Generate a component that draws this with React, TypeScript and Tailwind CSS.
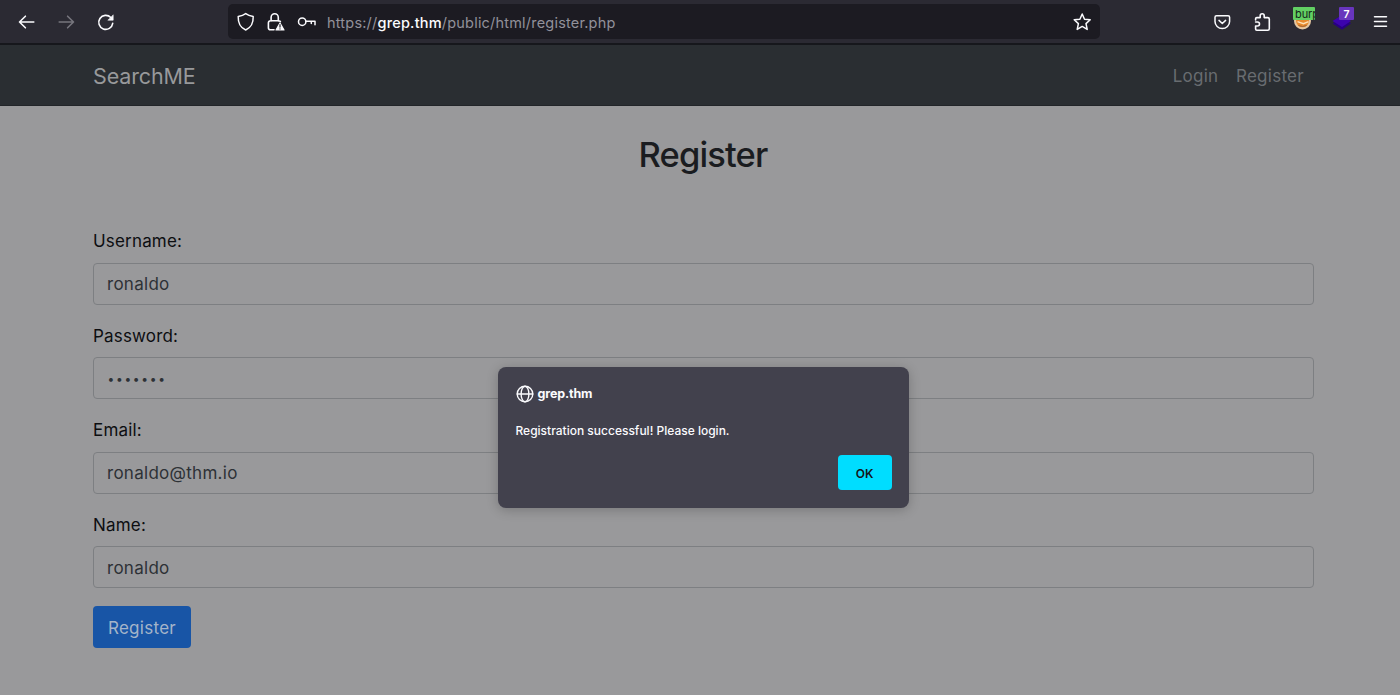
import React from 'react';

const fields = [
  { label: 'Username:', value: 'ronaldo', type: 'text' },
  { label: 'Password:', value: '•••••••', type: 'password' },
  { label: 'Email:', value: 'ronaldo@thm.io', type: 'text' },
  { label: 'Name:', value: 'ronaldo', type: 'text' },
];

const stroke = {
  fill: 'none',
  stroke: 'currentColor',
  strokeWidth: 1.6,
  strokeLinecap: 'round',
  strokeLinejoin: 'round',
} as const;

function Arrow({ className }: { className: string }) {
  return (
    <svg viewBox="0 0 18 18" className={`h-[18px] w-[18px] ${className}`} {...stroke}>
      <path d="M15.8 9H1.5M7.4 3.2L1.5 9l5.9 5.8" />
    </svg>
  );
}

function Reload() {
  return (
    <svg viewBox="0 0 18 18" className="ml-[22px] h-[18px] w-[18px]" {...stroke}>
      <path d="M15.7 10.3A7 7 0 1 1 13.8 4.5" />
      <path d="M16.2 2.2v5h-5z" fill="currentColor" strokeWidth="0.6" />
    </svg>
  );
}

function Shield() {
  return (
    <svg viewBox="0 0 18 20" className="h-5 w-[18px]" {...stroke} strokeWidth="1.5">
      <path d="M8.7 1.6Q11.5 3.6 16.2 4.6C16.4 10.5 14.6 15.4 8.7 18C2.8 15.4 1 10.5 1.2 4.6Q5.9 3.6 8.7 1.6z" />
    </svg>
  );
}

function LockWarning() {
  return (
    <svg viewBox="0 0 18 20" className="ml-3 h-5 w-[18px]" {...stroke}>
      <path d="M4.1 9V5.4a3.6 3.6 0 0 1 7.2 0V9M7 17.8H3.4a2 2 0 0 1-2-2v-5a2 2 0 0 1 2-2h8.3q1.2 0 1.7 .8" />
      <path d="M13 11L17 18H9z" fill="currentColor" strokeWidth="1.2" />
      <path d="M13 12.7v2.4M13 16.8v.1" stroke="#1c1b22" strokeWidth="1.2" />
    </svg>
  );
}

function Key() {
  return (
    <svg viewBox="0 0 20 12" className="ml-3 h-3 w-5" {...stroke} strokeWidth="1.5">
      <circle cx="5.2" cy="5.7" r="3.7" />
      <path d="M8.9 5.2H18v3.6M14.3 5.2v2.4" />
    </svg>
  );
}

function Star() {
  return (
    <svg viewBox="0 0 20 20" className="ml-auto h-5 w-5" {...stroke} strokeWidth="1.5">
      <path d="M10.2 2l2.3 5.2 5.7.6-4.2 3.8 1.2 5.8-5-3-5 3 1.2-5.8L2.2 7.8l5.7-.6z" />
    </svg>
  );
}

function Pocket() {
  return (
    <svg viewBox="0 0 18 18" className="h-[18px] w-[18px]" {...stroke} strokeWidth="1.5">
      <path d="M3.5 2.8h11.6q1.5 0 1.5 1.4v4.3a7.3 7 0 0 1-14.6 0V4.2q0-1.4 1.5-1.4z" />
      <path d="M6 7.4L9.3 10.5l3.3-3.1" />
    </svg>
  );
}

function Puzzle() {
  return (
    <svg viewBox="0 0 20 20" className="ml-[21px] h-5 w-5" {...stroke}>
      <path d="M3.6 8V6.8q0-1.2 1.2-1.2H8.2V3.8a2 2 0 0 1 4 0V5.6h3.6q1.5 0 1.5 1.5v9.6q0 1.5-1.5 1.5H4.8q-1.2 0-1.2-1.2v-3h1.9a2 2 0 0 0 0-4H3.6" />
    </svg>
  );
}

function Burp() {
  return (
    <div className="relative ml-[21px] h-6 w-[22px] overflow-hidden">
      <svg viewBox="0 0 22 24" className="h-6 w-[22px]">
        <circle cx="9.5" cy="14" r="8.5" fill="#e5c7a1" />
        <circle cx="9.5" cy="13.8" r="6.5" fill="#e88a2c" />
        <path d="M4.5 14.6l6 2 5-2" stroke="#ffe2b7" strokeWidth="1.5" fill="none" />
        <path d="M5.5 18.5q4 2 8 0" stroke="#8b5a3c" strokeWidth="0.8" fill="none" />
      </svg>
      <span className="absolute top-0 left-0 h-[13px] w-[22px] overflow-hidden rounded-[1px] bg-[#62cf63] pl-[2px] text-[11px] leading-[15px] tracking-[-0.1px] text-[#142519]">burp</span>
    </div>
  );
}

function Layers() {
  return (
    <div className="relative ml-[17px] h-6 w-[22px]">
      <svg viewBox="0 0 22 24" className="h-6 w-[22px]">
        <path d="M0.5 16.5l9.5-6 9 6-9 6.2z" fill="#280080" />
        <path d="M0.5 14l9.5-6 9 6-9 6z" fill="#3c03ad" />
      </svg>
      <span className="absolute top-0 left-[7px] h-[13px] w-[15px] rounded-[1px] bg-[#6835bd] text-center text-[10.5px] leading-[15px] font-semibold text-white">7</span>
    </div>
  );
}

function Globe() {
  return (
    <svg viewBox="0 0 18 18" className="h-[18px] w-[18px]" {...stroke} strokeWidth="1.4">
      <circle cx="9" cy="9" r="7.8" />
      <ellipse cx="9" cy="9" rx="3.9" ry="7.8" />
      <path d="M1.2 9h15.6" />
    </svg>
  );
}

function Toolbar() {
  return (
    <header className="flex h-[45px] items-start border-b-2 border-[#16171c] bg-[#2b2a33] text-[#fbfbfe]">
      <div className="flex h-[44px] w-[228px] items-center pl-[18px]">
        <Arrow className="" />
        <Arrow className="ml-[21px] rotate-180 text-[#77767e]" />
        <Reload />
      </div>
      <div className="mt-1 flex h-[35px] w-[872px] items-center rounded-[5px] bg-[#1c1b22] pr-2 pl-[9px]">
        <Shield />
        <LockWarning />
        <Key />
        <span className="ml-[10px] pt-[2px] text-[14.5px] tracking-[0.2px] whitespace-nowrap text-[#92919a]">
          https://<span className="font-medium text-[#fbfbfe]">grep.thm</span>/public/html/register.php
        </span>
        <Star />
      </div>
      <div className="flex h-[43px] items-center pl-[113px]">
        <Pocket />
        <Puzzle />
        <div className="-mt-[5px]"><Burp /></div>
        <div className="-mt-[5px]"><Layers /></div>
        <svg viewBox="0 0 16 16" className="ml-[19px] h-4 w-4" {...stroke} strokeWidth="1.5">
          <path d="M1.5 2.8h12M1.5 7.5h12M1.5 12.2h12" />
        </svg>
      </div>
    </header>
  );
}

function Alert() {
  return (
    <div role="alertdialog" className="absolute top-[367px] left-[498px] flex h-[141px] w-[411px] flex-col rounded-lg bg-[#42414d] px-[17.5px] pt-[18px] text-[#fbfbfe] shadow-[0_2px_12px_rgba(0,0,0,0.22)]">
      <div className="flex h-[18px] items-center gap-1 text-[12.5px] font-bold">
        <Globe />
        <span className="tracking-[-0.15px]">grep.thm</span>
      </div>
      <p className="mt-[19px] text-[12px] leading-[18px] font-medium">Registration successful! Please login.</p>
      <button className="mt-[15px] h-[35px] w-[54px] self-end rounded-[4px] bg-[#00ddff] pt-[3px] text-[12px] font-semibold text-[#15141a]">OK</button>
    </div>
  );
}

export default function App() {
  return (
    <div className="relative h-[695px] w-[1400px] overflow-hidden bg-[#99999b] font-['Inter',sans-serif] text-[#1a1c20]">
      <Toolbar />
      <nav className="flex h-[61px] items-center border-b border-[#222529] bg-[#2a2e32] pr-24 pl-[93px]">
        <span className="pt-[2px] text-[21.5px] tracking-[-0.15px] text-[#98999b]">SearchME</span>
        <div className="ml-auto flex gap-[17.5px] pt-[3px] text-[17px] tracking-[0.28px] text-[#686c70]">
          <span>Login</span>
          <span>Register</span>
        </div>
      </nav>
      <main className="px-[93px] pt-[27px]">
        <h1 className="w-[1220px] text-center text-[34.5px] leading-[44px] font-medium tracking-[-0.85px]">Register</h1>
        <form className="mt-[51.4px] w-[1220.5px]">
          {fields.map((field) => (
            <div key={field.label} className="h-[94.5px]">
              <div className="h-[34.5px] text-[17px] leading-[27.2px] tracking-[0.18px] text-[#0d0e11]">{field.label}</div>
              <div className="flex h-[42px] items-center rounded-[4px] border border-[#7d7f82] px-[13px] text-[17px] tracking-[0.28px] text-[#2d3136]">
                {field.type === 'password' ? (
                  <span className="pt-px pl-[0.5px] text-[12px] tracking-[1.7px]">{field.value}</span>
                ) : (
                  <span className="pt-[2px]">{field.value}</span>
                )}
              </div>
            </div>
          ))}
          <button className="-mt-[0.3px] block h-[42px] w-[98px] rounded-[4px] bg-[#1855a6] pt-[3px] text-[17px] tracking-[0.28px] text-[#a4b4c9]">Register</button>
        </form>
      </main>
      <Alert />
    </div>
  );
}
